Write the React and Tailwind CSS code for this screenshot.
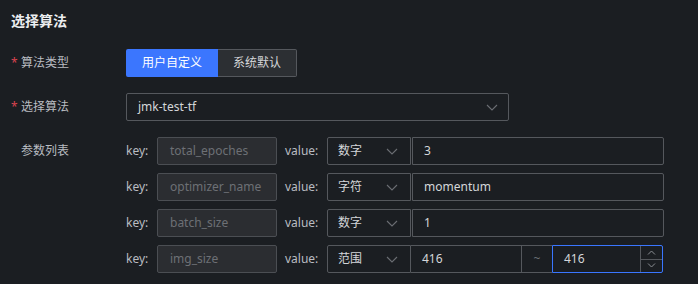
import React from "react";

const font = { fontFamily: '"Noto Sans", "Noto Sans CJK SC", sans-serif' };

function Chevron({ className = "" }) {
  return (
    <svg width="12" height="7" viewBox="0 0 12 7" className={className} fill="none">
      <path d="M1 1 L6 6 L11 1" stroke="#6b6e73" strokeWidth="1.1" />
    </svg>
  );
}

function Row({ k, type, value, range }) {
  return (
    <div className="flex items-center h-[28px]">
      <span className="w-[31px] text-[12px] text-[#b9bcc1]">key:</span>
      <div className="w-[120px] h-[28px] rounded-[2px] border border-[#4b4e53] bg-[#2b2d31] flex items-center pl-[12px] text-[12px] text-[#6d7075]">
        {k}
      </div>
      <span className="ml-[8px] w-[42px] text-[12px] text-[#b9bcc1]">value:</span>
      <div className="w-[84px] h-[28px] rounded-l-[2px] border border-[#55585d] flex items-center justify-between pl-[10px] pr-[12px] text-[12px] text-[#d4d6d9]">
        <span>{type}</span>
        <Chevron />
      </div>
      {range ? (
        <div className="flex h-[28px] w-[252px]">
          <div className="w-[111px] h-full border border-l-0 border-[#55585d] flex items-center pl-[11px] text-[12px] text-[#d4d6d9]">416</div>
          <div className="w-[30px] h-full border-y border-[#55585d] flex items-center justify-center text-[12px] text-[#6d7075]">~</div>
          <div className="flex-1 h-full rounded-r-[2px] border border-[#3a76ff] flex">
            <div className="flex-1 flex items-center pl-[11px] text-[12px] text-[#d4d6d9]">416</div>
            <div className="w-[22px] border-l border-[#55585d] flex flex-col">
              <div className="flex-1 flex items-center justify-center border-b border-[#55585d]">
                <svg width="9" height="5" viewBox="0 0 9 5" fill="none"><path d="M1 4.5 L4.5 1 L8 4.5" stroke="#8a8d92" strokeWidth="1" /></svg>
              </div>
              <div className="flex-1 flex items-center justify-center">
                <svg width="9" height="5" viewBox="0 0 9 5" fill="none"><path d="M1 0.5 L4.5 4 L8 0.5" stroke="#8a8d92" strokeWidth="1" /></svg>
              </div>
            </div>
          </div>
        </div>
      ) : (
        <div className="w-[252px] h-[28px] rounded-r-[2px] border border-[#55585d] ml-[1px] flex items-center pl-[11px] text-[12px] text-[#d4d6d9]">
          {value}
        </div>
      )}
    </div>
  );
}

export default function App() {
  return (
    <div className="w-[698px] h-[284px] bg-[#1b1e22] pl-[11px] pt-[12px] overflow-hidden" style={font}>
      <div className="text-[14px] font-semibold text-[#eceef0] leading-[18px]">选择算法</div>

      <div className="mt-[19px] flex items-center h-[28px]">
        <div className="w-[115px] flex items-center text-[12px] text-[#b9bcc1]">
          <span className="text-[#d9434f] w-[10px]">*</span>
          <span>算法类型</span>
        </div>
        <div className="flex h-[28px] text-[12px]">
          <div className="w-[92px] bg-[#3b76fe] rounded-l-[2px] flex items-center justify-center text-white">用户自定义</div>
          <div className="w-[79px] bg-[#2c2f33] border border-[#55585d] border-l-0 rounded-r-[2px] flex items-center justify-center text-[#d4d6d9]">系统默认</div>
        </div>
      </div>

      <div className="mt-[16px] flex items-center h-[28px]">
        <div className="w-[115px] flex items-center text-[12px] text-[#b9bcc1]">
          <span className="text-[#d9434f] w-[10px]">*</span>
          <span>选择算法</span>
        </div>
        <div className="w-[383px] h-[28px] rounded-[2px] border border-[#55585d] flex items-center justify-between pl-[11px] pr-[10px] text-[12px] text-[#d4d6d9]">
          <span>jmk-test-tf</span>
          <Chevron />
        </div>
      </div>

      <div className="mt-[16px] flex">
        <div className="w-[115px] pl-[10px] h-[28px] flex items-center text-[12px] text-[#b9bcc1]">参数列表</div>
        <div className="flex flex-col gap-[8px]">
          <Row k="total_epoches" type="数字" value="3" />
          <Row k="optimizer_name" type="字符" value="momentum" />
          <Row k="batch_size" type="数字" value="1" />
          <Row k="img_size" type="范围" range />
        </div>
      </div>
    </div>
  );
}
